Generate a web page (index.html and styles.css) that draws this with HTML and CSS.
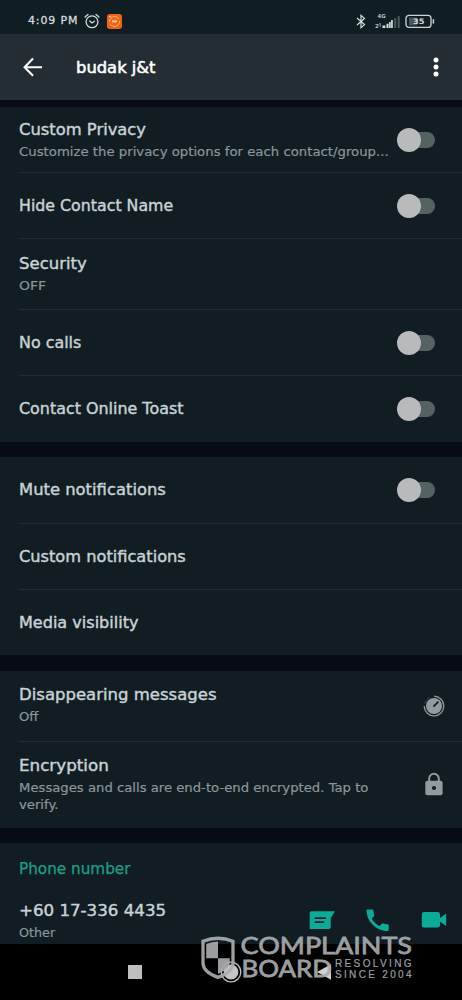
FILE: index.html
```html
<!DOCTYPE html>
<html lang="en">
<head>
<meta charset="utf-8">
<meta name="viewport" content="width=device-width">
<title>Contact settings</title>
<link rel="stylesheet" href="styles.css">
</head>
<body>
<div class="screen">
  <div class="status">
    <span class="clock">4:09 PM</span>
    <svg class="alarm" width="16" height="16" viewBox="0 0 16 16" fill="none" stroke="#d5dcde" stroke-width="1.3" stroke-linecap="round"><circle cx="8" cy="8.8" r="5.9"/><path d="M1 4 4 1.4M12 1.4 15 4M5.8 8 8 10l2.4-1.8"/></svg>
    <svg class="app" width="15" height="15" viewBox="0 0 15 15"><rect width="15" height="15" rx="3" fill="#ed6614"/><circle cx="7.5" cy="7.5" r="5" fill="none" stroke="#ffc39b" stroke-width=".9" stroke-dasharray="13 2"/><path d="M5 7.4h5" stroke="#ffc39b" stroke-width="2"/><path d="M2 2.5h2" stroke="#ffd7bb"/></svg>
    <svg class="bt" width="10" height="15" viewBox="0 0 10 15" fill="none" stroke="#d5dcde" stroke-width="1.2"><path d="m1 4 7.5 6.6L5 13.6V1.4l3.5 3L1 11"/></svg>
    <svg class="signal" width="25" height="15" viewBox="0 0 25 15"><text x="2.5" y="4.3" class="net" textLength="8" lengthAdjust="spacingAndGlyphs">4G</text><text x="0" y="13.5" class="net">2</text><path d="M5.2 13V9.5M3.9 10.5 5.2 9.2" stroke="#b8c0c3" stroke-width=".8"/><path fill="#dbe1e3" d="M7.5 11.5h2.8V14H7.5zM11.5 9.7h2V14h-2zM14.1 8h1.6v6h-1.6zM16.1 6h1.7v8h-1.7z"/><path fill="#4c5a60" d="M19.2 4h2v10h-2zM22.7 2h2v12h-2z"/></svg>
    <svg class="battery" width="30" height="15" viewBox="0 0 30 15"><rect x="4" y="3.5" width="8" height="8" fill="#4a565b"/><rect x="1" y="1.4" width="25" height="12" rx="3" fill="none" stroke="#ccd4d6" stroke-width="1.3"/><path d="M28.4 5.2v4.4" stroke="#ccd4d6" stroke-width="1.5"/><text x="8" y="10.2" class="pct" textLength="11.5" lengthAdjust="spacingAndGlyphs">35</text></svg>
  </div>
  <header class="bar">
    <svg class="back" width="20" height="20" viewBox="0 0 20 20" fill="none" stroke="#fff" stroke-width="2.1"><path d="M19 10.2H2M10 1.4 1.6 10.2 10 18.8"/></svg>
    <h1 class="name"><span class="fit">budak j&amp;t</span></h1>
    <svg class="more" width="6" height="20" viewBox="0 0 6 20" fill="#fff"><circle cx="3" cy="3" r="2.5"/><circle cx="3" cy="10" r="2.5"/><circle cx="3" cy="17.1" r="2.5"/></svg>
  </header>
  <main>
    <section class="group privacy">
      <div class="row tight"><div class="copy"><div class="title"><span class="fit w-custom">Custom Privacy</span></div><div class="sub"><span class="fit w-customize">Customize the privacy options for each contact/group...</span></div></div><i class="toggle"></i></div>
      <div class="row"><div class="title"><span class="fit w-hide">Hide Contact Name</span></div><i class="toggle"></i></div>
      <div class="row double roomy"><div class="copy"><div class="title"><span class="fit w-security">Security</span></div><div class="sub"><span class="fit w-caps">OFF</span></div></div></div>
      <div class="row"><div class="title"><span class="fit w-calls">No calls</span></div><i class="toggle"></i></div>
      <div class="row"><div class="title"><span class="fit w-toast">Contact Online Toast</span></div><i class="toggle"></i></div>
    </section>
    <section class="group alerts">
      <div class="row"><div class="title"><span class="fit w-mute">Mute notifications</span></div><i class="toggle"></i></div>
      <div class="row"><div class="title"><span class="fit w-notify">Custom notifications</span></div></div>
      <div class="row"><div class="title"><span class="fit w-media">Media visibility</span></div></div>
    </section>
    <section class="group">
      <div class="row double"><div class="copy"><div class="title"><span class="fit w-messages">Disappearing messages</span></div><div class="sub"><span class="fit w-off">Off</span></div></div>
        <svg class="side" width="22" height="22" viewBox="0 0 22 22"><circle cx="11" cy="11" r="8" fill="#929b9e"/><path d="M11 1.2A9.8 9.8 0 1 1 1.2 11" fill="none" stroke="#929b9e" stroke-width="1.3"/><path d="M1.7 8.3 3 5.7M4.3 4.1 6.5 2.4" stroke="#414f55"/><path d="m10.4 11.7 5-5" stroke="#111d23" stroke-width="1.7"/></svg></div>
      <div class="row triple"><div class="copy"><div class="title"><span class="fit w-encryption">Encryption</span></div><div class="sub"><span class="fit w-verify">Messages and calls are end-to-end encrypted. Tap to<br>verify.</span></div></div>
        <svg class="side" width="22" height="26" viewBox="0 0 22 26"><path d="M6.2 10V6.6a4.8 4.8 0 0 1 9.6 0V10" fill="none" stroke="#929b9e" stroke-width="2"/><rect x="2.3" y="8.7" width="17.3" height="14.6" rx="2" fill="#929b9e"/><circle cx="11" cy="16" r="2.1" fill="#111d23"/></svg></div>
    </section>
    <section class="group phone">
      <div class="title green"><span class="fit w-phone">Phone number</span></div>
      <div class="contact">
        <div class="copy"><div class="title"><span class="fit w-number">+60 17-336 4435</span></div><div class="sub"><span class="fit w-other">Other</span></div></div>
        <div class="actions">
          <svg width="26" height="20" viewBox="0 0 26 20"><path fill="#0bab98" d="M2.5 1.2H26l-4.3 7V17q0 2-2 2H.7V3q0-1.8 1.8-1.8z"/><path d="M5.5 8.1H17M5.5 12.1h9.7" stroke="#10252a" stroke-width="1.7"/></svg>
          <svg width="24" height="24" viewBox="0 0 24 24"><path fill="#0bab98" d="M1.5 1.5h4.7c.8 0 1.1.5 1.2 1.3q.1 2.3.8 4.2c.2.7.1 1.1-.4 1.6l-2 2c1.8 3.5 4.3 5.9 7.7 7.5l2.3-2.3c.4-.4.9-.5 1.5-.3q2 .7 4.3.8c.8.1 1.1.5 1.1 1.2V22q0 1-1.2 1C10.4 22.8.9 13.8.5 2.7q0-1.2 1-1.2z"/></svg>
          <svg width="26" height="18" viewBox="0 0 26 18"><rect x=".8" y="1.1" width="18.2" height="15.5" rx="2.4" fill="#0bab98"/><path fill="#0bab98" d="m18.8 7.2 6.4-4.7v12.4l-6.4-4.4z"/></svg>
        </div>
      </div>
    </section>
  </main>
  <nav class="nav">
    <svg width="14" height="14" viewBox="0 0 14 14"><rect width="14" height="14" fill="#bebebe"/></svg>
    <svg width="22" height="22" viewBox="0 0 22 22"><circle cx="11" cy="11" r="9.8" fill="none" stroke="#c5c5c5" stroke-width="1.3"/><circle cx="11" cy="11" r="7.4" fill="#c5c5c5"/></svg>
    <svg width="14" height="16" viewBox="0 0 14 16"><path fill="#d0d0d0" d="M0 8 14 .3v15.4z"/></svg>
  </nav>
  <svg class="watermark" width="220" height="55" viewBox="0 -5 220 55">
    <path d="M3 6.2Q18 .3 33 6.2V28q0 9-15 14.4Q3 37 3 28z" fill="none" stroke="#a9acaf" stroke-width="3.3"/>
    <path fill="#a9acaf" d="M6.2 9q6-2.5 11.8-2.6v16.8H6.2zM18 23.2h11.8V28q0 5.7-11.8 11z"/>
    <text class="mark" x="40.5" y="19.4" textLength="171.5" lengthAdjust="spacingAndGlyphs">COMPLAINTS</text>
    <text class="mark" x="41.5" y="42.2" textLength="90.5" lengthAdjust="spacingAndGlyphs">BOARD</text>
    <text class="tag" x="135" y="32.2" textLength="76.5">RESOLVING</text>
    <text class="tag" x="135" y="42.9" textLength="76.5">SINCE 2004</text>
  </svg>
</div>
</body>
</html>
```
FILE: styles.css
```css
* { box-sizing: border-box; }
body { margin: 0; background: #070b13; font-family: "DejaVu Sans", sans-serif; }
svg { display: block; flex: none; }
.screen { position: relative; width: 462px; height: 1000px; overflow: hidden; display: flex; flex-direction: column; }

.fit { display: inline-block; white-space: nowrap; transform: scaleX(var(--stretch, 1)); transform-origin: left center; }

.status { height: 34px; background: #101d23; display: flex; align-items: center; padding: 8px 27px 0 28px; }
.clock { width: 56px; font-size: 11px; line-height: 16px; letter-spacing: .85px; color: #d5dcde; -webkit-text-stroke: .3px; white-space: nowrap; }
.app { margin-left: 7px; }
.bt { margin-left: auto; }
.signal { margin-left: 9px; }
.battery { margin-left: 5px; }
.net { font-size: 5.5px; font-weight: bold; fill: #b8c0c3; }
.pct { font-size: 7.5px; font-weight: bold; fill: #d5dcde; }

.bar { height: 66px; background: #242d33; display: flex; align-items: center; padding: 0 23px; }
.name { margin: 1px 0 0 33px; font-size: 15px; line-height: 22px; font-weight: normal; color: #fff; -webkit-text-stroke: .5px; --stretch: 1.09; }
.more { margin-left: auto; }

main { display: flex; flex-direction: column; gap: 15px; padding-top: 7px; height: 844px; }
.group { background: #111d23; }
.row { height: 66px; margin-left: 19px; padding-right: 27px; display: flex; align-items: center; justify-content: space-between; border-bottom: 1px solid #202d33; }
.row:last-child { border-bottom: 0; }
.alerts .row:first-child { height: 67px; }
.alerts .row:last-child { height: 65px; }
.group:nth-child(3) { margin-top: 1px; }
.row .copy { align-self: flex-start; }
.tight .copy { padding-top: 12px; }
.double { height: 71px; }
.double .copy, .triple .copy { padding-top: 13px; }
.roomy .copy { padding-top: 14px; }
.triple { height: 86px; }
.title { font-size: 15px; line-height: 22px; color: #c9d2d5; -webkit-text-stroke: .4px; }
.sub { margin-top: 2px; font-size: 12.5px; line-height: 17px; color: #8b9699; -webkit-text-stroke: .2px; }

.toggle { position: relative; flex: none; width: 38px; height: 24px; display: flex; align-items: center; }
.toggle::before { content: ""; width: 30px; height: 16px; margin-left: 8px; border-radius: 8px; background: #566164; }
.toggle::after { content: ""; position: absolute; left: 0; top: 0; width: 24px; height: 24px; border-radius: 50%; background: #b9babb; }
.side { margin-right: -10px; }

.w-custom { --stretch: 1.09; }
.w-customize { --stretch: 1.061; }
.w-hide { --stretch: 1.054; }
.w-security { --stretch: 1.1; }
.w-caps { --stretch: 1.12; }
.w-calls { --stretch: 1.06; }
.w-toast { --stretch: 1.061; }
.w-mute { --stretch: 1.092; }
.w-notify { --stretch: 1.08; }
.w-media { --stretch: 1.07; }
.w-messages { --stretch: 1.1; }
.w-off { --stretch: 1.05; }
.w-encryption { --stretch: 1.115; }
.w-verify { --stretch: 1.056; }
.w-phone { --stretch: 1.015; }
.w-number { --stretch: 1.11; }
.w-other { --stretch: 1.02; }

.phone { flex: 1; padding: 15px 15px 0 19px; }
.green { color: #1f9e88; -webkit-text-stroke: .25px; }
.contact { display: flex; justify-content: space-between; padding-top: 20px; }
.actions { display: flex; align-items: center; gap: 31px; height: 40px; }

.nav { height: 56px; background: #000; display: flex; align-items: center; padding-left: 128px; }
.nav svg:nth-child(2) { margin-left: 78px; }
.nav svg:last-child { margin-left: 75px; }
.watermark { position: absolute; left: 200px; top: 930px; opacity: .92; }
.mark { font: 23.8px Lato, sans-serif; fill: #a9acaf; stroke: #a9acaf; stroke-width: .8px; }
.tag { font: 10px "Liberation Sans", sans-serif; fill: #a9acaf; stroke: #a9acaf; stroke-width: .2px; }
```
